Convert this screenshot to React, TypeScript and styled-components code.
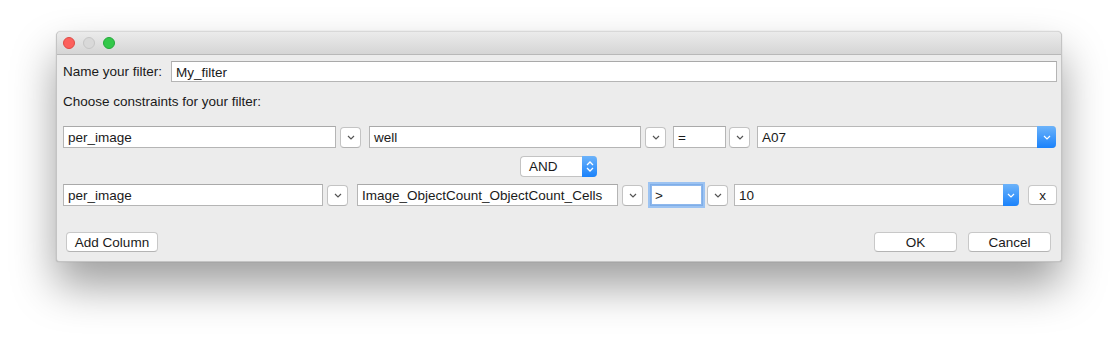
import React from "react"
import styled, { createGlobalStyle } from "styled-components"

const GlobalStyle = createGlobalStyle`
  body {
    margin: 0;
    background: #ffffff;
    font-family: "Liberation Sans", Arial, sans-serif;
    font-size: 13.5px;
    color: #1a1a1a;
  }
`

const Desktop = styled.div`
  width: 1118px;
  height: 342px;
  padding: 31px 0 0 56px;
  box-sizing: border-box;
`

const Window = styled.div`
  width: 1006px;
  height: 231px;
  box-sizing: border-box;
  background: #ececec;
  border: 1px solid #c4c4c4;
  border-top-color: #d8d8d8;
  border-radius: 5px 5px 3px 3px;
  box-shadow: 0 24px 44px rgba(0, 0, 0, 0.38), 0 0 1px rgba(0, 0, 0, 0.3);
  overflow: hidden;
  display: flex;
  flex-direction: column;
`

const TitleBar = styled.div`
  height: 22px;
  flex: none;
  display: flex;
  align-items: center;
  gap: 8px;
  padding-left: 6px;
  background: linear-gradient(#ebebeb, #d5d5d5);
  border-bottom: 1px solid #b8b8b8;
`

const Light = styled.span<{ $c: string; $b: string }>`
  width: 12px;
  height: 12px;
  border-radius: 50%;
  box-sizing: border-box;
  background: ${(p) => p.$c};
  border: 0.5px solid ${(p) => p.$b};
`

const Body = styled.div`
  flex: 1;
  display: flex;
  flex-direction: column;
  padding: 6px 5px 0 6px;
`

const Row = styled.div<{ $top?: number }>`
  display: flex;
  align-items: center;
  margin-top: ${(p) => p.$top ?? 0}px;
`

const Label = styled.span`
  width: 108px;
  flex: none;
  white-space: nowrap;
`

const Field = styled.div<{ $w: number; $h?: number; $focus?: boolean }>`
  width: ${(p) => p.$w}px;
  height: ${(p) => p.$h ?? 22}px;
  box-sizing: border-box;
  background: #ffffff;
  border: 1px solid #b5b5b5;
  border-top-color: #a9a9a9;
  padding: 1px 4px 0;
  display: flex;
  align-items: center;
  flex: none;
  white-space: nowrap;
  overflow: hidden;
  ${(p) =>
    p.$focus &&
    `border-color: #7faee8; box-shadow: 0 0 0 2px #9cc3f2, inset 0 0 0 1px #8fb8ec;`}
`

const Arrow = styled.button<{ $ml: number }>`
  width: 21px;
  height: 21px;
  margin-left: ${(p) => p.$ml}px;
  box-sizing: border-box;
  background: #ffffff;
  border: 1px solid #c3c3c3;
  border-bottom-color: #b2b2b2;
  border-radius: 4px;
  padding: 0;
  display: flex;
  align-items: center;
  justify-content: center;
  flex: none;
`

const Combo = styled.div<{ $w: number; $ml: number }>`
  width: ${(p) => p.$w}px;
  height: 22px;
  margin-left: ${(p) => p.$ml}px;
  box-sizing: border-box;
  background: #ffffff;
  border: 1px solid #b8b8b8;
  border-right: none;
  border-radius: 0 4px 4px 0;
  display: flex;
  align-items: center;
  flex: none;
`

const ComboText = styled.span`
  flex: 1;
  padding: 1px 0 0 4px;
`

const BlueCap = styled.span<{ $w: number }>`
  width: ${(p) => p.$w}px;
  align-self: stretch;
  margin: -1px 0;
  background: linear-gradient(#6cb3fa, #1a82fb);
  border-radius: 0 4px 4px 0;
  display: flex;
  align-items: center;
  justify-content: center;
`

const Gap = styled.span<{ $w: number }>`
  width: ${(p) => p.$w}px;
  flex: none;
`

const Note = styled.div`
  margin-top: 12px;
  height: 16px;
  line-height: 16px;
`

const Popup = styled.div`
  width: 77px;
  height: 21px;
  margin-left: 457px;
  box-sizing: border-box;
  background: #ffffff;
  border: 1px solid #c3c3c3;
  border-right: none;
  border-radius: 4px;
  display: flex;
  align-items: center;
`

const PopupText = styled.span`
  flex: 1;
  padding-left: 8px;
`

const PushButton = styled.button<{ $w: number; $ml?: number }>`
  width: ${(p) => p.$w}px;
  height: 20px;
  margin-left: ${(p) => p.$ml ?? 0}px;
  box-sizing: border-box;
  background: #ffffff;
  border: 1px solid #c8c8c8;
  border-bottom-color: #b4b4b4;
  border-radius: 4px;
  font-family: "Liberation Sans", Arial, sans-serif;
  font-size: 13.5px;
  color: #1a1a1a;
  padding: 0;
  flex: none;
`

const Spacer = styled.span`
  flex: 1;
`

const Chevron = ({ color = "#555" }: { color?: string }) => (
  <svg width="8" height="5" viewBox="0 0 8 5">
    <path d="M1 1 L4 4 L7 1" fill="none" stroke={color} strokeWidth="1.2" />
  </svg>
)

const Stepper = () => (
  <svg width="8" height="13" viewBox="0 0 8 13">
    <path d="M1 5 L4 2 L7 5 M1 8 L4 11 L7 8" fill="none" stroke="#fff" strokeWidth="1.3" />
  </svg>
)

export default function App() {
  return (
    <>
      <GlobalStyle />
      <Desktop>
        <Window>
          <TitleBar>
            <Light $c="#fc605c" $b="#de4a45" />
            <Light $c="#d9d9d9" $b="#c6c6c6" />
            <Light $c="#34c84a" $b="#24a93a" />
          </TitleBar>
          <Body>
            <Row>
              <Label>Name your filter:</Label>
              <Field $w={886} $h={21}>My_filter</Field>
            </Row>
            <Note>Choose constraints for your filter:</Note>
            <Row $top={16}>
              <Field $w={273}>per_image</Field>
              <Arrow $ml={4}><Chevron /></Arrow>
              <Gap $w={8} />
              <Field $w={272}>well</Field>
              <Arrow $ml={4}><Chevron /></Arrow>
              <Gap $w={7} />
              <Field $w={53}>=</Field>
              <Arrow $ml={3}><Chevron /></Arrow>
              <Combo $w={299} $ml={7}>
                <ComboText>A07</ComboText>
                <BlueCap $w={19}><Chevron color="#fff" /></BlueCap>
              </Combo>
            </Row>
            <Row $top={8}>
              <Popup>
                <PopupText>AND</PopupText>
                <BlueCap $w={15}><Stepper /></BlueCap>
              </Popup>
            </Row>
            <Row $top={7}>
              <Field $w={260}>per_image</Field>
              <Arrow $ml={4}><Chevron /></Arrow>
              <Gap $w={9} />
              <Field $w={261}>Image_ObjectCount_ObjectCount_Cells</Field>
              <Arrow $ml={4}><Chevron /></Arrow>
              <Gap $w={7} />
              <Field $w={53} $focus>&gt;</Field>
              <Arrow $ml={4}><Chevron /></Arrow>
              <Combo $w={285} $ml={6}>
                <ComboText>10</ComboText>
                <BlueCap $w={16}><Chevron color="#fff" /></BlueCap>
              </Combo>
              <PushButton $w={29} $ml={9}>x</PushButton>
            </Row>
            <Row $top={26}>
              <PushButton $w={92} $ml={3}>Add Column</PushButton>
              <Spacer />
              <PushButton $w={83}>OK</PushButton>
              <PushButton $w={83} $ml={11}>Cancel</PushButton>
              <Gap $w={5} />
            </Row>
          </Body>
        </Window>
      </Desktop>
    </>
  )
}
